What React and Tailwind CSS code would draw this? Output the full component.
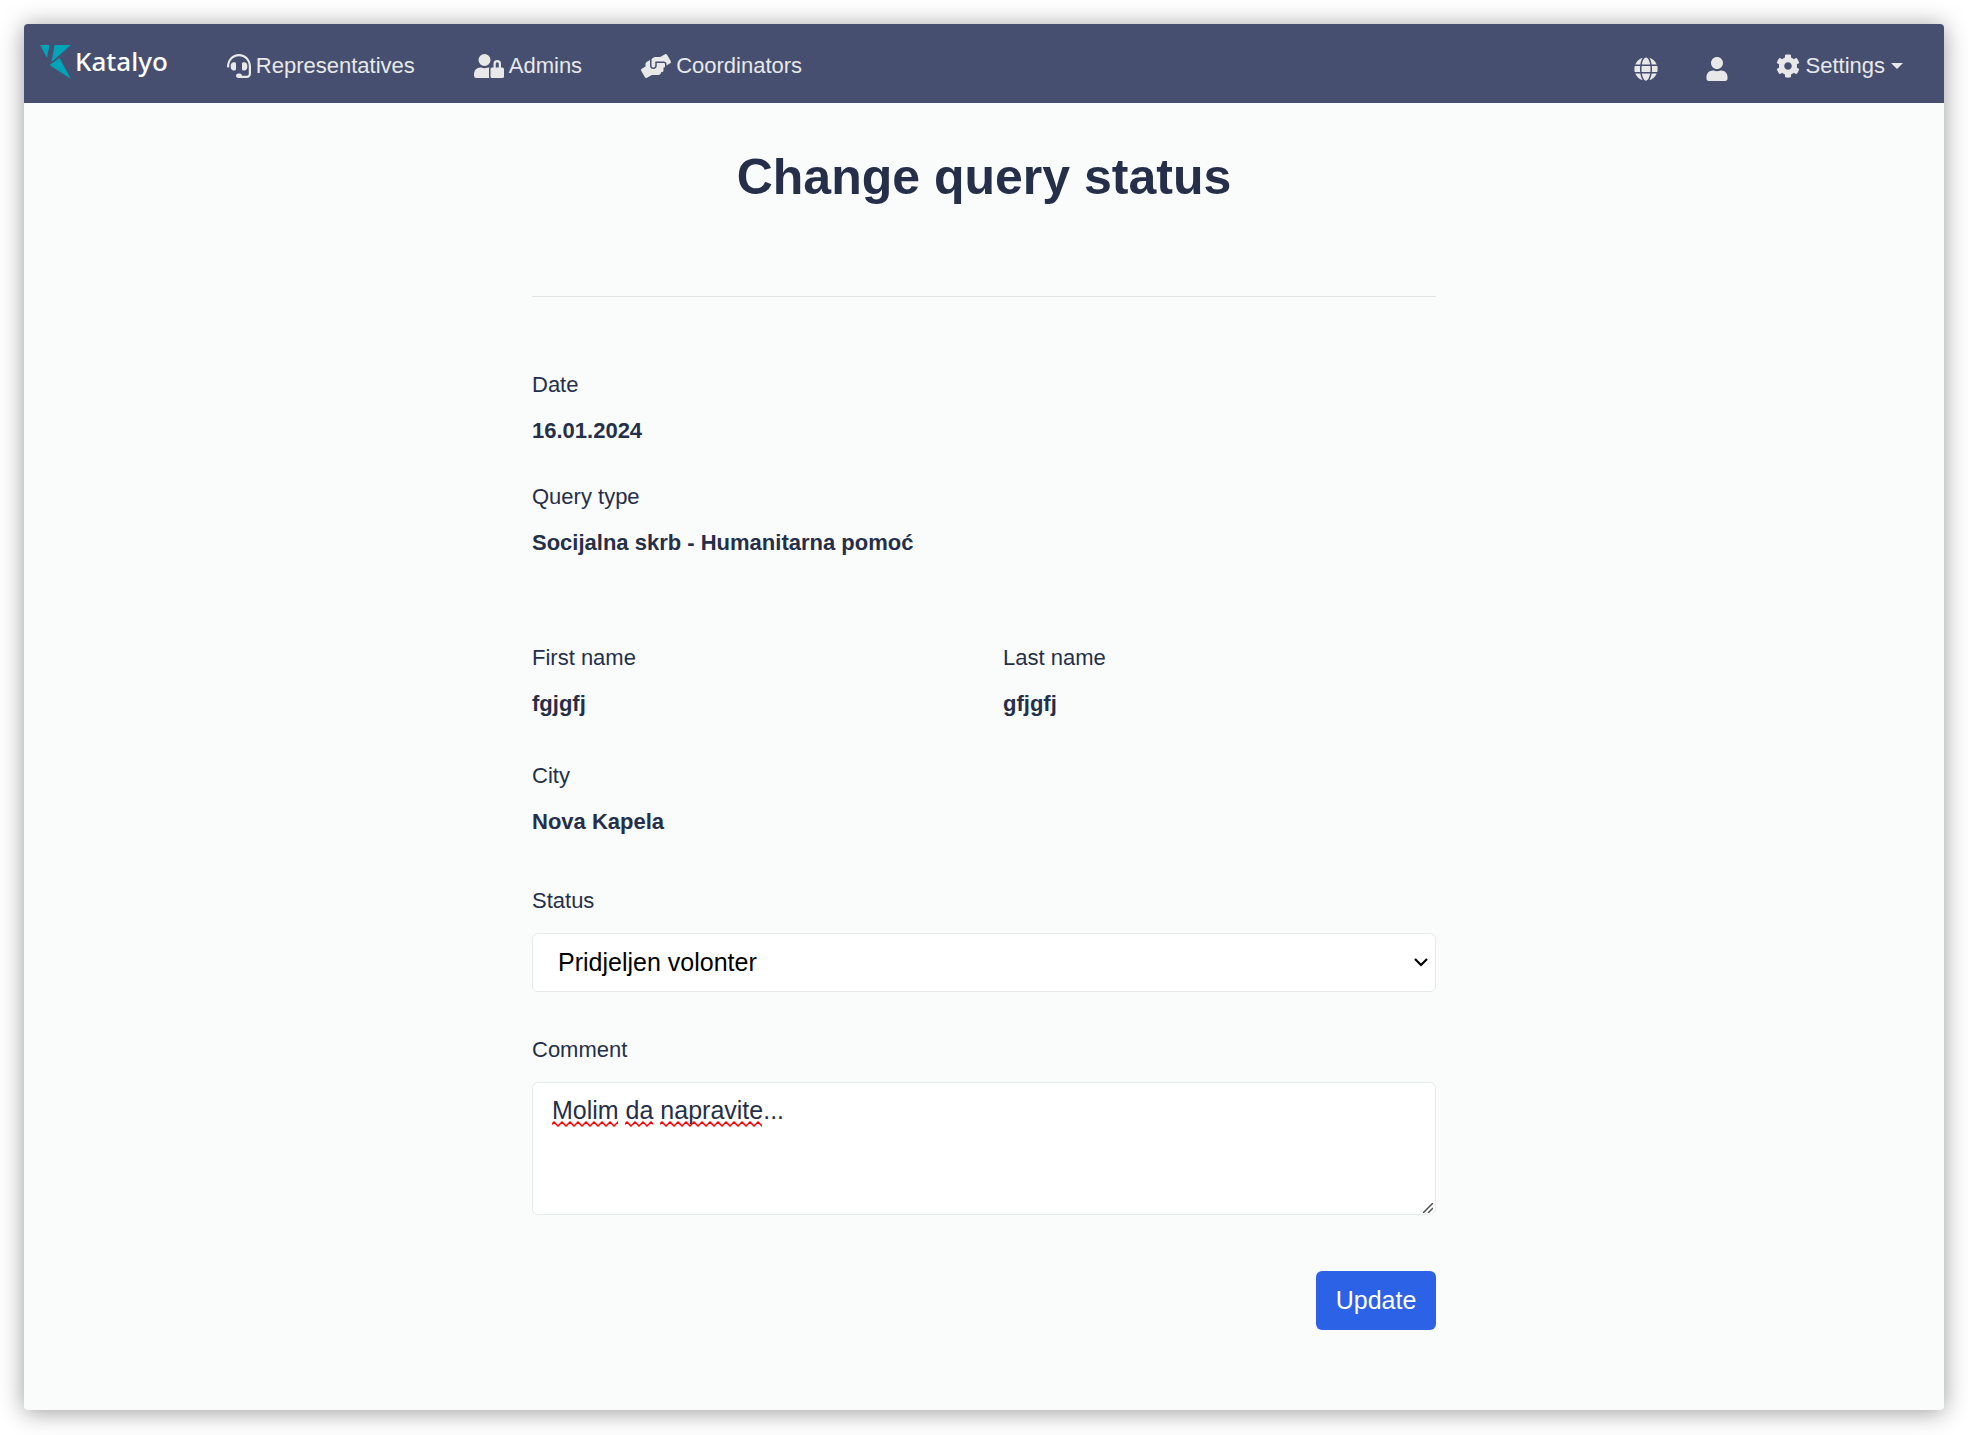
import React, { useState } from "react";
import { FaHandsHelping, FaGlobe, FaUser, FaCog } from "react-icons/fa";

function Logo() {
  return (
    <a href="#" className="flex items-center gap-1 text-white">
      <svg width="31" height="34" viewBox="0 0 31 34" fill="#00a3b8" aria-hidden="true">
        <path d="M0 0h9.500L7 13z" />
        <path d="M14.500 0H31L11.500 17z" />
        <path d="M19.500 13L31 34 9.500 20z" />
      </svg>
      <span className="pb-[2px] font-['Noto_Sans',sans-serif] text-[26px] leading-[34px] font-medium">Katalyo</span>
    </a>
  );
}

function HeadsetIcon({ className }) {
  return (
    <svg className={className} viewBox="0 0 512 512" fill="currentColor" aria-hidden="true">
      <path d="M192 208c0-18-14-32-32-32h-16c-35 0-64 29-64 64v48c0 35 29 64 64 64h16c18 0 32-14 32-32V208z" />
      <path d="M368 352c35 0 64-29 64-64v-48c0-35-29-64-64-64h-16c-18 0-32 14-32 32v112c0 18 14 32 32 32h16z" />
      <path d="M256 0C113 0 5 119 0 256v16c0 9 7 16 16 16h16c9 0 16-7 16-16v-16c0-115 93-208 208-208s208 93 208 208v166c0 23-19 42-42 42H320c0-27-21-48-48-48h-32c-27 0-48 21-48 48s21 48 48 48h182c50 0 90-40 90-90V256C507 119 399 0 256 0z" />
    </svg>
  );
}

function UserLockIcon({ className }) {
  return (
    <svg className={className} viewBox="0 0 640 512" fill="currentColor" aria-hidden="true">
      <path d="M224 256A128 128 0 1 0 96 128a128 128 0 0 0 128 128zm96 64a63 63 0 0 1 8-30.500c-4.800-.5-9.500-1.500-14.500-1.500h-16.700a174 174 0 0 1-145.800 0h-16.700A134.400 134.400 0 0 0 0 422.400V464a48 48 0 0 0 48 48h280.900a63.500 63.500 0 0 1-8.900-32z" />
      <path d="M608 288h-32v-80a80 80 0 0 0-160 0v80h-32a32 32 0 0 0-32 32v160a32 32 0 0 0 32 32h224a32 32 0 0 0 32-32V320a32 32 0 0 0-32-32zm-80 0h-64v-80a32 32 0 0 1 64 0z" />
    </svg>
  );
}

function NavLink({ icon: Icon, iconClass, children }) {
  return (
    <a href="#" className="flex items-center gap-[5px]">
      <Icon className={iconClass} aria-hidden="true" />
      <span>{children}</span>
    </a>
  );
}

function Header() {
  return (
    <header className="flex h-[79px] items-center justify-between rounded-t bg-[#464f70] pr-[41px] pl-4 text-[22px] leading-[34px] text-[#e8e8e8]">
      <div className="flex items-center">
        <div className="pb-1">
          <Logo />
        </div>
        <nav className="ml-[59px] flex gap-[59px] pt-1">
          <NavLink icon={HeadsetIcon} iconClass="size-6">Representatives</NavLink>
          <NavLink icon={UserLockIcon} iconClass="h-6 w-[30px]">Admins</NavLink>
          <NavLink icon={FaHandsHelping} iconClass="h-6 w-[30px]">Coordinators</NavLink>
        </nav>
      </div>
      <div className="flex items-center pt-1">
        <button type="button" aria-label="Language" className="mr-12 pt-[6px]">
          <FaGlobe className="size-6" />
        </button>
        <button type="button" aria-label="Account" className="mr-12 pt-[6px]">
          <FaUser className="h-6 w-[22px]" />
        </button>
        <button type="button" className="flex items-center gap-[6px]">
          <FaCog className="size-6" aria-hidden="true" />
          <span>Settings</span>
          <svg width="12" height="6" viewBox="0 0 12 6" fill="currentColor" aria-hidden="true">
            <path d="M0 0h12L6 6z" />
          </svg>
        </button>
      </div>
    </header>
  );
}

function Detail({ label, children }) {
  return (
    <div>
      <dt>{label}</dt>
      <dd className="mt-[13px] font-bold">{children}</dd>
    </div>
  );
}

function Squiggle({ id, className }) {
  return (
    <svg className={className} height="6" aria-hidden="true">
      <defs>
        <pattern id={id} width="8" height="6" patternUnits="userSpaceOnUse">
          <path d="M-2 5L2 1L6 5L10 1" fill="none" stroke="#f00" strokeWidth="1.500" />
        </pattern>
      </defs>
      <rect width="100%" height="6" fill={`url(#${id})`} />
    </svg>
  );
}

export default function App() {
  const [comment, setComment] = useState("Molim da napravite...");
  return (
    <div className="min-h-screen bg-white p-6 font-['Liberation_Sans',Arial,sans-serif]">
      <div className="rounded bg-[#fafcfc] pb-20 text-[#252f4a] shadow-[0_2px_24px_rgba(0,0,0,0.4)]">
        <Header />
        <main className="mx-auto max-w-[904px] pt-[44px] text-[22px] leading-[33px]">
          <h1 className="text-center text-[50px] leading-[60px] font-bold">Change query status</h1>
          <hr className="mt-[89px] border-[#e1e4e5]" />
          <form onSubmit={(e) => e.preventDefault()}>
            <dl className="mt-[71px]">
              <Detail label="Date">16.01.2024</Detail>
              <div className="mt-[33px]">
                <Detail label="Query type">Socijalna skrb - Humanitarna pomoć</Detail>
              </div>
              <div className="mt-[82px] grid grid-cols-2 gap-[38px]">
                <Detail label="First name">fgjgfj</Detail>
                <Detail label="Last name">gfjgfj</Detail>
              </div>
              <div className="mt-[39px]">
                <Detail label="City">Nova Kapela</Detail>
              </div>
            </dl>

            <label htmlFor="status" className="mt-[46px] block">Status</label>
            <div className="relative mt-4">
              <select
                id="status"
                className="block h-[59px] w-full appearance-none rounded-md border border-[#e7eaeb] bg-white pr-10 pl-[25px] text-[25px] text-black"
              >
                <option>Pridjeljen volonter</option>
              </select>
              <svg
                className="pointer-events-none absolute top-[25px] right-2"
                width="14"
                height="9"
                viewBox="0 0 14 9"
                fill="none"
                stroke="#000"
                strokeWidth="2.200"
                aria-hidden="true"
              >
                <path d="M1 1l6 6 6-6" />
              </svg>
            </div>

            <label htmlFor="comment" className="mt-[41px] block">Comment</label>
            <div className="relative mt-4">
              <textarea
                id="comment"
                spellCheck={false}
                value={comment}
                onChange={(e) => setComment(e.target.value)}
                className="block h-[133px] w-full resize-none rounded-md border border-[#e7eaeb] bg-white px-[19px] py-2 text-[25px] leading-[38px]"
              />
              {comment === "Molim da napravite..." && (
                <div className="pointer-events-none absolute top-[39px] left-5 flex gap-[7px]">
                  <Squiggle id="wave-1" className="w-[66px]" />
                  <Squiggle id="wave-2" className="w-[28px]" />
                  <Squiggle id="wave-3" className="w-[102px]" />
                </div>
              )}
              <svg
                className="pointer-events-none absolute right-[3px] bottom-[2px]"
                width="10"
                height="10"
                viewBox="0 0 10 10"
                stroke="#4d4d4d"
                strokeWidth="1.500"
                aria-hidden="true"
              >
                <path d="M0 10L10 0M5 10l5-5" />
              </svg>
            </div>

            <div className="mt-14 flex justify-end">
              <button type="submit" className="h-[59px] w-[120px] rounded-md bg-[#2c62e6] text-[25px] text-white">
                Update
              </button>
            </div>
          </form>
        </main>
      </div>
    </div>
  );
}
